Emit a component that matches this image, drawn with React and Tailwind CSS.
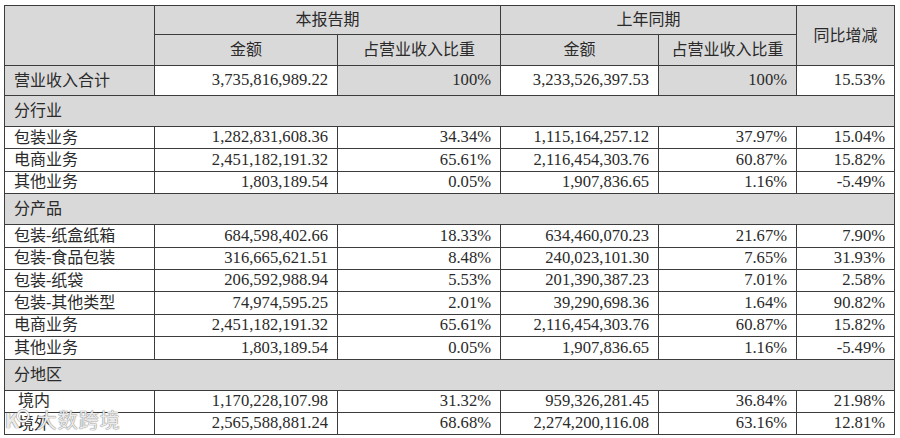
import React from "react";

const sections = [
  {
    title: "分行业",
    rows: [
      ["包装业务", "1,282,831,608.36", "34.34%", "1,115,164,257.12", "37.97%", "15.04%"],
      ["电商业务", "2,451,182,191.32", "65.61%", "2,116,454,303.76", "60.87%", "15.82%"],
      ["其他业务", "1,803,189.54", "0.05%", "1,907,836.65", "1.16%", "-5.49%"],
    ],
  },
  {
    title: "分产品",
    rows: [
      ["包装-纸盒纸箱", "684,598,402.66", "18.33%", "634,460,070.23", "21.67%", "7.90%"],
      ["包装-食品包装", "316,665,621.51", "8.48%", "240,023,101.30", "7.65%", "31.93%"],
      ["包装-纸袋", "206,592,988.94", "5.53%", "201,390,387.23", "7.01%", "2.58%"],
      ["包装-其他类型", "74,974,595.25", "2.01%", "39,290,698.36", "1.64%", "90.82%"],
      ["电商业务", "2,451,182,191.32", "65.61%", "2,116,454,303.76", "60.87%", "15.82%"],
      ["其他业务", "1,803,189.54", "0.05%", "1,907,836.65", "1.16%", "-5.49%"],
    ],
  },
  {
    title: "分地区",
    rows: [
      ["\u00a0境内", "1,170,228,107.98", "31.32%", "959,326,281.45", "36.84%", "21.98%"],
      ["\u00a0境外", "2,565,588,881.24", "68.68%", "2,274,200,116.08", "63.16%", "12.81%"],
    ],
  },
];

const cell = "border border-[#3c3c3c] px-[9px] whitespace-nowrap";
const num = "text-[16.6px]";

const App = () => {
  return (
    <div className="relative w-[900px] h-[438px] bg-white overflow-hidden text-[#2a2a2a] text-[16px] leading-none font-['Liberation_Serif','Noto_Sans_CJK_SC',serif]">
      <table className="ml-[4px] mt-[5px] border-collapse table-fixed w-[890px]">
        <colgroup>
          <col className="w-[150px]" />
          <col className="w-[183px]" />
          <col className="w-[163px]" />
          <col className="w-[158px]" />
          <col className="w-[138px]" />
          <col className="w-[98px]" />
        </colgroup>
        <thead>
          <tr className="h-[29px] bg-[#d9d9d9]">
            <th rowSpan={2} className={cell}></th>
            <th colSpan={2} className={`${cell} font-normal text-center`}>本报告期</th>
            <th colSpan={2} className={`${cell} font-normal text-center`}>上年同期</th>
            <th rowSpan={2} className={`${cell} font-normal text-center`}>同比增减</th>
          </tr>
          <tr className="h-[31px] bg-[#d9d9d9]">
            <th className={`${cell} font-normal text-center`}>金额</th>
            <th className={`${cell} font-normal text-center`}>占营业收入比重</th>
            <th className={`${cell} font-normal text-center`}>金额</th>
            <th className={`${cell} font-normal text-center`}>占营业收入比重</th>
          </tr>
        </thead>
        <tbody>
          <tr className="h-[30px]">
            <td className={`${cell} bg-[#d9d9d9] text-left`}>营业收入合计</td>
            <td className={`${cell} ${num} bg-white text-right`}>3,735,816,989.22</td>
            <td className={`${cell} ${num} bg-[#d9d9d9] text-right`}>100%</td>
            <td className={`${cell} ${num} bg-white text-right`}>3,233,526,397.53</td>
            <td className={`${cell} ${num} bg-[#d9d9d9] text-right`}>100%</td>
            <td className={`${cell} ${num} bg-white text-right`}>15.53%</td>
          </tr>
          {sections.map((s) => (
            <React.Fragment key={s.title}>
              <tr className="h-[31px] bg-[#d9d9d9]">
                <td colSpan={6} className={`${cell} text-left`}>{s.title}</td>
              </tr>
              {s.rows.map((r, i) => (
                <tr key={i} className="h-[22.4px] bg-white">
                  <td className={`${cell} text-left`}>{r[0]}</td>
                  {r.slice(1).map((v, j) => (
                    <td key={j} className={`${cell} ${num} text-right`}>{v}</td>
                  ))}
                </tr>
              ))}
            </React.Fragment>
          ))}
        </tbody>
      </table>

      {/* watermark */}
      <div className="absolute left-[5px] top-[410px] flex items-center text-white/85 text-[20px] font-['Noto_Sans_CJK_SC',sans-serif] [text-shadow:0_0_1px_#777,0_0_1px_#777]">
        <span className="font-bold">K</span>
        <svg width="16" height="16" viewBox="0 0 16 16" className="-ml-[4px] -mt-[8px]">
          <circle cx="8" cy="8" r="5.5" fill="none" stroke="#999" strokeOpacity="0.7" strokeWidth="3" />
          <circle cx="8" cy="8" r="5.5" fill="none" stroke="#fff" strokeOpacity="0.9" strokeWidth="1.6" />
        </svg>
        <span className="ml-[6px] tracking-[1px]">大数跨境</span>
      </div>
    </div>
  );
};

export default App;
